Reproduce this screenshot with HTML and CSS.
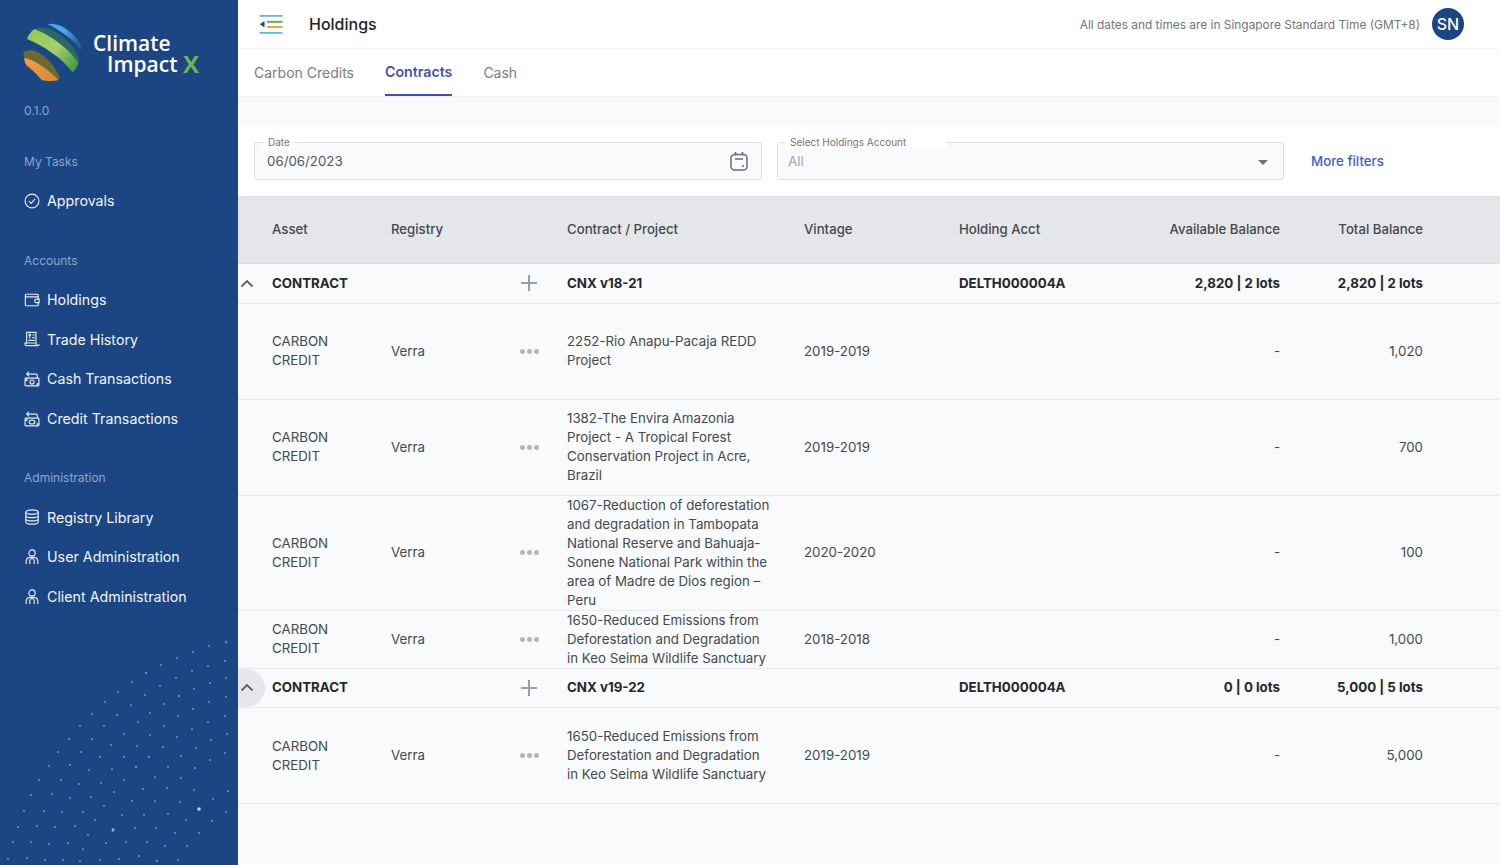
FILE: index.html
```html
<!DOCTYPE html>
<html lang="en">
<head>
    <meta charset="UTF-8">
    <meta name="viewport" content="width=device-width, initial-scale=1.0">
    <title>Holdings</title>
    <link rel="stylesheet" href="styles.css">
</head>
<body>
    <aside class="sidebar">
        <div class="brand">
            <svg class="brand-globe" viewBox="0 0 240 225" aria-hidden="true">
                <defs>
                    <linearGradient id="blueBand" x1="0" y1="0" x2="1" y2="0.6">
                        <stop offset="0.5" stop-color="#4fa6e0"/>
                        <stop offset="1" stop-color="#2a5c96"/>
                    </linearGradient>
                    <linearGradient id="greenBand" x1="0" y1="0" x2="1" y2="0.7">
                        <stop offset="0" stop-color="#8ccb55"/>
                        <stop offset="0.6" stop-color="#a5d06a"/>
                        <stop offset="1" stop-color="#4fa04a"/>
                    </linearGradient>
                    <linearGradient id="orangeBand" x1="0" y1="0" x2="1" y2="0.8">
                        <stop offset="0" stop-color="#eba24a"/>
                        <stop offset="1" stop-color="#d98a33"/>
                    </linearGradient>
                </defs>
                <path d="M98 28C110 24 125 27 140 34C165 48 190 70 198 92L196 105C180 78 135 45 98 28Z" fill="url(#blueBand)"/>
                <path d="M58 42C72 36 90 36 105 42C142 58 178 92 192 130L190 142C160 100 110 62 58 42Z" fill="#2a6a66"/>
                <path d="M58 42C110 62 160 100 190 142C188 155 182 165 172 172C140 128 85 92 36 72C40 60 48 50 58 42Z" fill="url(#greenBand)"/>
                <path d="M25 112C35 104 52 104 66 110C95 125 122 155 135 188L130 195C108 170 65 135 28 128Z" fill="#6d6a30"/>
                <path d="M28 128C65 135 108 170 130 195C115 200 95 198 80 195C62 172 45 160 36 152C30 145 27 136 28 128Z" fill="url(#orangeBand)"/>
            </svg>
            <div class="brand-name">
                <span>Climate</span>
                <span class="brand-second">Impact <b>X</b></span>
            </div>
        </div>
        <div class="version">0.1.0</div>

        <div class="nav-title nav-title-tasks">My Tasks</div>
        <a class="nav-item">
            <svg class="nav-icon" viewBox="0 0 18 18"><circle cx="9" cy="9" r="7.800"/><path d="M5.500 9.200l2.500 2.500 4.500-5"/></svg>
            Approvals
        </a>

        <div class="nav-title nav-title-accounts">Accounts</div>
        <a class="nav-item">
            <svg class="nav-icon" viewBox="0 0 18 18"><path d="M16 8V3.500a1 1 0 0 0-1-1H2.500a1 1 0 0 0-1 1v11a1 1 0 0 0 1 1H15a1 1 0 0 0 1-1V12M1.500 5.500H16"/><path d="M17 8h-3a2 2 0 0 0 0 4h3z"/></svg>
            Holdings
        </a>
        <a class="nav-item">
            <svg class="nav-icon" viewBox="0 0 18 18"><path d="M3 14V1.500h10.500V13"/><path d="M1 13.500h12.500c0 1.500.5 3 2 3H2.500c-1 0-1.500-1.500-1.500-3zM15.500 16.500c1 0 1.500-1 1.500-2"/><path d="M5 5l1.500-1.500L8 5M6.500 3.500v5M9.500 4.500h2.500M9.500 7.500h2.500M5 10.500h7"/></svg>
            Trade History
        </a>
        <a class="nav-item">
            <svg class="nav-icon" viewBox="0 0 18 18"><rect x="1.200" y="8" width="15.600" height="8.800" rx="1"/><circle cx="9" cy="12.400" r="2.300"/><path d="M15 8V5a1.500 1.500 0 0 0-1.500-1.500H3M5.500 1L3 3.500 5.500 6M1.200 10.500h2v-2.500M16.800 14.500h-2v2.300"/></svg>
            Cash Transactions
        </a>
        <a class="nav-item">
            <svg class="nav-icon" viewBox="0 0 18 18"><rect x="1.200" y="8" width="15.600" height="8.800" rx="1"/><ellipse cx="9" cy="12.400" rx="3.200" ry="2.200"/><path d="M15 8V5a1.500 1.500 0 0 0-1.500-1.500H3M5.500 1L3 3.500 5.500 6M1.200 10.500h2v-2.500M16.800 14.500h-2v2.300"/></svg>
            Credit Transactions
        </a>

        <div class="nav-title nav-title-admin">Administration</div>
        <a class="nav-item">
            <svg class="nav-icon" viewBox="0 0 18 18"><ellipse cx="9" cy="3.500" rx="7" ry="2.500"/><path d="M2 3.500v11C2 15.900 5.100 17 9 17s7-1.100 7-2.500v-11M2 7.200c0 1.400 3.100 2.500 7 2.500s7-1.100 7-2.500M2 10.900c0 1.400 3.100 2.500 7 2.500s7-1.100 7-2.500"/></svg>
            Registry Library
        </a>
        <a class="nav-item">
            <svg class="nav-icon" viewBox="0 0 18 18"><circle cx="9" cy="4.500" r="3.500"/><path d="M2.500 17v-3.500A4.500 4.500 0 0 1 7 9.500h4a4.500 4.500 0 0 1 4.500 4V17M9 9.500c-1 1.500-2.500 2-2.500 4V17M9 9.500c1 1.500 2.500 2 2.500 4V17"/></svg>
            User Administration
        </a>
        <a class="nav-item">
            <svg class="nav-icon" viewBox="0 0 18 18"><circle cx="9" cy="4.500" r="3.500"/><path d="M2.500 17v-3.500A4.500 4.500 0 0 1 7 9.500h4a4.500 4.500 0 0 1 4.500 4V17M9 9.500c-1 1.500-2.500 2-2.500 4V17M9 9.500c1 1.500 2.500 2 2.500 4V17"/></svg>
            Client Administration
        </a>

        <svg class="dots" viewBox="0 0 238 235" aria-hidden="true">
            <g fill="#6a92b8">
                <circle cx="226" cy="12" r="1.200"/><circle cx="209" cy="16" r="1.100"/><circle cx="193" cy="22" r="1.100"/><circle cx="177" cy="28" r="1.100"/><circle cx="161" cy="35" r="1.100"/><circle cx="146" cy="43" r="1.200"/><circle cx="132" cy="52" r="1.100"/><circle cx="118" cy="62" r="1.100"/><circle cx="105" cy="72" r="1.100"/><circle cx="92" cy="84" r="1.100"/><circle cx="80" cy="96" r="1.100"/><circle cx="69" cy="109" r="1.100"/><circle cx="58" cy="122" r="1.100"/><circle cx="49" cy="136" r="1.100"/><circle cx="39" cy="150" r="1.100"/><circle cx="31" cy="165" r="1.100"/><circle cx="24" cy="181" r="1.100"/><circle cx="18" cy="197" r="1.100"/><circle cx="13" cy="212" r="1.100"/><circle cx="8" cy="229" r="1.100"/>
                <circle cx="225" cy="31" r="1.100"/><circle cx="208" cy="36" r="1.100"/><circle cx="192" cy="41" r="1.100"/><circle cx="176" cy="48" r="1.100"/><circle cx="160" cy="56" r="1.100"/><circle cx="145" cy="65" r="1.100"/><circle cx="131" cy="75" r="1.100"/><circle cx="117" cy="85" r="1.100"/><circle cx="104" cy="96" r="1.100"/><circle cx="92" cy="109" r="1.100"/><circle cx="81" cy="122" r="1.100"/><circle cx="70" cy="135" r="1.100"/><circle cx="61" cy="150" r="1.100"/><circle cx="52" cy="164" r="1.100"/><circle cx="44" cy="181" r="1.100"/><circle cx="37" cy="196" r="1.100"/><circle cx="31" cy="212" r="1.100"/><circle cx="27" cy="228" r="1.100"/>
                <circle cx="226" cy="48" r="1.100"/><circle cx="210" cy="53" r="1.100"/><circle cx="194" cy="59" r="1.100"/><circle cx="179" cy="66" r="1.200"/><circle cx="164" cy="74" r="1.100"/><circle cx="150" cy="83" r="1.100"/><circle cx="138" cy="92" r="1.100"/><circle cx="124" cy="104" r="1.100"/><circle cx="111" cy="115" r="1.100"/><circle cx="100" cy="127" r="1.100"/><circle cx="89" cy="140" r="1.100"/><circle cx="79" cy="154" r="1.100"/><circle cx="70" cy="168" r="1.100"/><circle cx="62" cy="182" r="1.100"/><circle cx="55" cy="197" r="1.100"/><circle cx="49" cy="214" r="1.100"/><circle cx="45" cy="230" r="1.100"/>
                <circle cx="226" cy="67" r="1.100"/><circle cx="209" cy="72" r="1.100"/><circle cx="193" cy="79" r="1.100"/><circle cx="178" cy="86" r="1.100"/><circle cx="164" cy="96" r="1.100"/><circle cx="150" cy="105" r="1.100"/><circle cx="137" cy="116" r="1.100"/><circle cx="124" cy="127" r="1.100"/><circle cx="112" cy="139" r="1.100"/><circle cx="101" cy="153" r="1.100"/><circle cx="91" cy="167" r="1.100"/><circle cx="83" cy="182" r="1.100"/><circle cx="75" cy="196" r="1.100"/><circle cx="68" cy="213" r="1.100"/><circle cx="63" cy="230" r="1.100"/>
                <circle cx="225" cy="86" r="1.100"/><circle cx="208" cy="92" r="1.100"/><circle cx="192" cy="99" r="1.100"/><circle cx="177" cy="107" r="1.100"/><circle cx="163" cy="117" r="1.100"/><circle cx="149" cy="127" r="1.100"/><circle cx="136" cy="137" r="1.200"/><circle cx="124" cy="150" r="1.100"/><circle cx="114" cy="162" r="1.100"/><circle cx="104" cy="176" r="1.100"/><circle cx="95" cy="190" r="1.100"/><circle cx="88" cy="205" r="1.100"/><circle cx="83" cy="219" r="1.100"/><circle cx="80" cy="231" r="1.100"/>
                <circle cx="227" cy="104" r="1.100"/><circle cx="211" cy="110" r="1.100"/><circle cx="196" cy="118" r="1.100"/><circle cx="181" cy="126" r="1.100"/><circle cx="168" cy="137" r="1.100"/><circle cx="155" cy="147" r="1.100"/><circle cx="143" cy="159" r="1.100"/><circle cx="132" cy="171" r="1.100"/><circle cx="122" cy="185" r="1.100"/><circle cx="113" cy="199" r="1.100"/><circle cx="106" cy="213" r="1.100"/><circle cx="100" cy="230" r="1.100"/>
                <circle cx="225" cy="123" r="1.100"/><circle cx="210" cy="130" r="1.100"/><circle cx="195" cy="138" r="1.100"/><circle cx="181" cy="148" r="1.100"/><circle cx="167" cy="158" r="1.100"/><circle cx="155" cy="171" r="1.100"/><circle cx="144" cy="185" r="1.100"/><circle cx="135" cy="198" r="1.100"/><circle cx="126" cy="212" r="1.100"/><circle cx="119" cy="229" r="1.100"/>
                <circle cx="228" cy="161" r="1.100"/><circle cx="213" cy="169" r="1.100"/><circle cx="194" cy="160" r="1.100"/><circle cx="180" cy="172" r="1.100"/><circle cx="168" cy="184" r="1.100"/><circle cx="156" cy="198" r="1.100"/><circle cx="147" cy="212" r="1.100"/><circle cx="139" cy="226" r="1.100"/><circle cx="157" cy="231" r="1.100"/><circle cx="165" cy="216" r="1.100"/><circle cx="175" cy="203" r="1.100"/><circle cx="186" cy="190" r="1.100"/><circle cx="187" cy="216" r="1.100"/><circle cx="178" cy="230" r="1.100"/>
                <circle cx="226" cy="182" r="1.100"/><circle cx="212" cy="191" r="1.100"/><circle cx="199" cy="203" r="1.100"/>
            </g>
            <circle cx="199" cy="179" r="1.800" fill="#c0d3e0"/>
            <circle cx="113" cy="200" r="1.500" fill="#93b3cc"/>
        </svg>
    </aside>

    <main class="main">
        <header class="topbar">
            <svg class="menu-icon" viewBox="0 0 24 19" aria-hidden="true">
                <rect x="0.500" y="0" width="23" height="1.800" fill="#6db6d8"/>
                <rect x="8" y="5.800" width="15.500" height="2" fill="#6fae4c"/>
                <rect x="8" y="11" width="15.500" height="2" fill="#e6a93c"/>
                <rect x="0.500" y="17" width="23" height="1.800" fill="#6db6d8"/>
                <path d="M5.500 6v6.500L0.800 9.300z" fill="#1b4583"/>
            </svg>
            <h1 class="page-title">Holdings</h1>
            <span class="timezone">All dates and times are in Singapore Standard Time (GMT+8)</span>
            <div class="avatar">SN</div>
        </header>

        <nav class="tabs">
            <a class="tab">Carbon Credits</a>
            <a class="tab tab-active">Contracts</a>
            <a class="tab">Cash</a>
        </nav>

        <div class="spacer"></div>

        <div class="filters">
            <div class="field field-date">
                <span class="field-label">Date</span>
                <span class="field-value">06/06/2023</span>
                <svg class="calendar" viewBox="0 0 20 20" aria-hidden="true"><rect x="2" y="3.500" width="16" height="15.500" rx="3.500"/><path d="M6.500 1v3.500M13.500 1v3.500M6 8h8M13 15h2"/></svg>
            </div>
            <div class="field field-account">
                <span class="field-label">Select Holdings Account</span>
                <span class="field-value field-value-muted">All</span>
                <span class="caret"></span>
            </div>
            <a class="more-filters">More filters</a>
        </div>

        <section class="table">
            <div class="row row-head">
                <div></div>
                <div>Asset</div>
                <div>Registry</div>
                <div></div>
                <div>Contract / Project</div>
                <div>Vintage</div>
                <div>Holding Acct</div>
                <div class="num">Available Balance</div>
                <div class="num">Total Balance</div>
            </div>

            <div class="row row-group">
                <div class="toggle"><svg viewBox="0 0 14 9"><path d="M1.500 7.500L7 2l5.500 5.500"/></svg></div>
                <div>CONTRACT</div>
                <div></div>
                <div class="plus"><svg viewBox="0 0 16 16"><path d="M8 0v16M0 8h16"/></svg></div>
                <div>CNX v18-21</div>
                <div></div>
                <div>DELTH000004A</div>
                <div class="num">2,820 | 2 lots</div>
                <div class="num">2,820 | 2 lots</div>
            </div>

            <div class="row row-tall">
                <div></div>
                <div class="asset">CARBON CREDIT</div>
                <div>Verra</div>
                <div class="more"><i></i><i></i><i></i></div>
                <div class="project">2252-Rio Anapu-Pacaja REDD Project</div>
                <div>2019-2019</div>
                <div></div>
                <div class="num">-</div>
                <div class="num">1,020</div>
            </div>

            <div class="row row-tall">
                <div></div>
                <div class="asset">CARBON CREDIT</div>
                <div>Verra</div>
                <div class="more"><i></i><i></i><i></i></div>
                <div class="project">1382-The Envira Amazonia Project - A Tropical Forest Conservation Project in Acre, Brazil</div>
                <div>2019-2019</div>
                <div></div>
                <div class="num">-</div>
                <div class="num">700</div>
            </div>

            <div class="row">
                <div></div>
                <div class="asset">CARBON CREDIT</div>
                <div>Verra</div>
                <div class="more"><i></i><i></i><i></i></div>
                <div class="project">1067-Reduction of deforestation and degradation in Tambopata National Reserve and Bahuaja-Sonene National Park within the area of Madre de Dios region – Peru</div>
                <div>2020-2020</div>
                <div></div>
                <div class="num">-</div>
                <div class="num">100</div>
            </div>

            <div class="row">
                <div></div>
                <div class="asset">CARBON CREDIT</div>
                <div>Verra</div>
                <div class="more"><i></i><i></i><i></i></div>
                <div class="project">1650-Reduced Emissions from Deforestation and Degradation in Keo Seima Wildlife Sanctuary</div>
                <div>2018-2018</div>
                <div></div>
                <div class="num">-</div>
                <div class="num">1,000</div>
            </div>

            <div class="row row-group">
                <div class="toggle toggle-hover"><svg viewBox="0 0 14 9"><path d="M1.500 7.500L7 2l5.500 5.500"/></svg></div>
                <div>CONTRACT</div>
                <div></div>
                <div class="plus"><svg viewBox="0 0 16 16"><path d="M8 0v16M0 8h16"/></svg></div>
                <div>CNX v19-22</div>
                <div></div>
                <div>DELTH000004A</div>
                <div class="num">0 | 0 lots</div>
                <div class="num">5,000 | 5 lots</div>
            </div>

            <div class="row row-tall">
                <div></div>
                <div class="asset">CARBON CREDIT</div>
                <div>Verra</div>
                <div class="more"><i></i><i></i><i></i></div>
                <div class="project">1650-Reduced Emissions from Deforestation and Degradation in Keo Seima Wildlife Sanctuary</div>
                <div>2019-2019</div>
                <div></div>
                <div class="num">-</div>
                <div class="num">5,000</div>
            </div>
        </section>
    </main>
</body>
</html>
```

FILE: styles.css
```css
* {
    box-sizing: border-box;
}
html, body {
    height: 100%;
}
body {
    margin: 0;
    display: flex;
    overflow: hidden;
    background: #f9fafc;
    color: #45494f;
    font-family: 'Inter', 'Liberation Sans', sans-serif;
    font-size: 13.300px;
    line-height: 19px;
}

/* sidebar */
.sidebar {
    position: relative;
    flex: 0 0 238px;
    height: 865px;
    padding-left: 24px;
    background: #1b4583;
    color: #fff;
    overflow: hidden;
}
.brand {
    display: flex;
    align-items: flex-start;
    height: 81px;
    margin-left: -9px;
    padding-top: 15px;
}
.brand-globe {
    flex: 0 0 80px;
    width: 80px;
    height: 75px;
}
.brand-name {
    display: flex;
    flex-direction: column;
    margin: 18px 0 0 -2px;
    font-family: 'Open Sans', 'Liberation Sans', sans-serif;
    font-size: 21px;
    font-weight: 600;
    line-height: 21px;
}
.brand-second {
    margin-left: 14px;
}
.brand-second b {
    display: inline-block;
    vertical-align: top;
    color: #6fb24f;
    font-weight: 700;
    font-size: 24px;
    line-height: 19px;
}
.version {
    margin-top: 21px;
    color: #8ea6c7;
    font-size: 12px;
    line-height: 18px;
}
.nav-title {
    color: #8ea6c7;
    font-size: 12px;
    line-height: 18px;
}
.nav-title-tasks {
    margin-top: 33px;
}
.nav-title-accounts {
    margin-top: 31px;
}
.nav-title-admin {
    margin-top: 31px;
}
.nav-item {
    display: flex;
    align-items: center;
    height: 39.700px;
    gap: 7px;
    color: #f1f4f9;
    font-size: 14.250px;
}
.nav-title + .nav-item {
    margin-top: 10px;
}
.nav-icon {
    flex: 0 0 16px;
    width: 16px;
    height: 16px;
    fill: none;
    stroke: #e6ebf3;
    stroke-width: 1.300;
}
.dots {
    position: absolute;
    left: 0;
    bottom: 0;
    width: 238px;
    height: 235px;
}

/* main column */
.main {
    flex: 1;
    min-width: 0;
    display: flex;
    flex-direction: column;
}
.topbar {
    display: flex;
    align-items: center;
    height: 49px;
    padding: 0 36px 0 21px;
    background: #fff;
    border-bottom: 1px solid #f3f4f6;
}
.menu-icon {
    width: 24px;
    height: 19px;
}
.page-title {
    margin: 0 0 0 26px;
    color: #1f2328;
    font-size: 16px;
    font-weight: 500;
}
.timezone {
    margin-left: auto;
    color: #72767d;
    font-size: 11.900px;
}
.avatar {
    display: flex;
    align-items: center;
    justify-content: center;
    width: 32px;
    height: 32px;
    margin-left: 12px;
    border-radius: 50%;
    background: #1b4583;
    color: #fff;
    font-size: 16px;
    font-weight: 500;
}
.tabs {
    display: flex;
    gap: 31px;
    height: 48px;
    padding-left: 16px;
    background: #fff;
    border-bottom: 1px solid #eef0f3;
    font-size: 14px;
}
.tab {
    display: flex;
    align-items: center;
    height: 47px;
    color: #797d84;
    padding-bottom: 1px;
}
.tab-active {
    color: #3f51b5;
    font-size: 14.200px;
    font-weight: 600;
    border-bottom: 2px solid #3f51b5;
}
.spacer {
    height: 29px;
}
.filters {
    display: flex;
    align-items: flex-start;
    gap: 15px;
    height: 70px;
    padding: 16px 0 0 16px;
    background: #fff;
}
.field {
    position: relative;
    display: flex;
    align-items: center;
    height: 38px;
    padding: 0 12px;
    background: #f9fafc;
    border: 1px solid #dcdfe4;
    border-radius: 3px;
}
.field-date {
    width: 508px;
}
.field-account {
    width: 507px;
    padding-left: 10px;
}
.field-label {
    position: absolute;
    top: -7px;
    left: 8px;
    padding: 0 5px;
    background: #fff;
    color: #72767d;
    font-size: 10px;
    line-height: 13px;
}
.field-account .field-label {
    left: 7px;
    padding-right: 40px;
}
.field-value {
    color: #55595f;
    font-size: 13.300px;
}
.field-value-muted {
    color: #a3a6ab;
    font-size: 13.500px;
}
.calendar {
    width: 20px;
    height: 20px;
    margin-left: auto;
    fill: none;
    stroke: #6b6e73;
    stroke-width: 1.500;
}
.caret {
    margin: 2px 3px 0 auto;
    border-top: 5px solid #6e7074;
    border-left: 5px solid transparent;
    border-right: 5px solid transparent;
}
.more-filters {
    margin: 10px 0 0 12px;
    color: #3f5bd0;
    font-size: 13.300px;
    font-weight: 500;
}

/* table */
.table {
    flex: 1;
}
.row {
    display: grid;
    grid-template-columns: 34px 119px 118px 58px 237px 155px 141px 180px 143px 77px;
    align-items: center;
    border-bottom: 1px solid #e8eaed;
}
.row-tall {
    min-height: 96px;
}
.row-head {
    height: 68px;
    padding-bottom: 1px;
    background: #e4e6ea;
    border-top: 1px solid #dfe1e5;
    border-bottom: 1px solid #d9dbdf;
    font-size: 13.200px;
    font-weight: 500;
}
.row-group {
    height: 39.500px;
    color: #24282c;
    font-weight: 700;
}
.num {
    text-align: right;
}
.asset {
    width: 70px;
}
.project {
    width: 204px;
}
.toggle {
    display: flex;
    align-items: center;
    height: 38px;
    width: 27px;
    padding-left: 2px;
}
.toggle svg {
    width: 14px;
    height: 9px;
    fill: none;
    stroke: #5d6065;
    stroke-width: 1.800;
}
.toggle-hover {
    background: #e6e7ea;
    border-radius: 0 19px 19px 0;
}
.plus {
    display: flex;
    justify-content: center;
    margin-left: -19px;
}
.plus svg {
    width: 16px;
    height: 16px;
    stroke: #9a9ea5;
    stroke-width: 2;
}
.more {
    display: flex;
    justify-content: center;
    gap: 2px;
    margin-left: -18px;
}
.more i {
    width: 5px;
    height: 5px;
    border-radius: 50%;
    background: #b4b6bb;
}
```
